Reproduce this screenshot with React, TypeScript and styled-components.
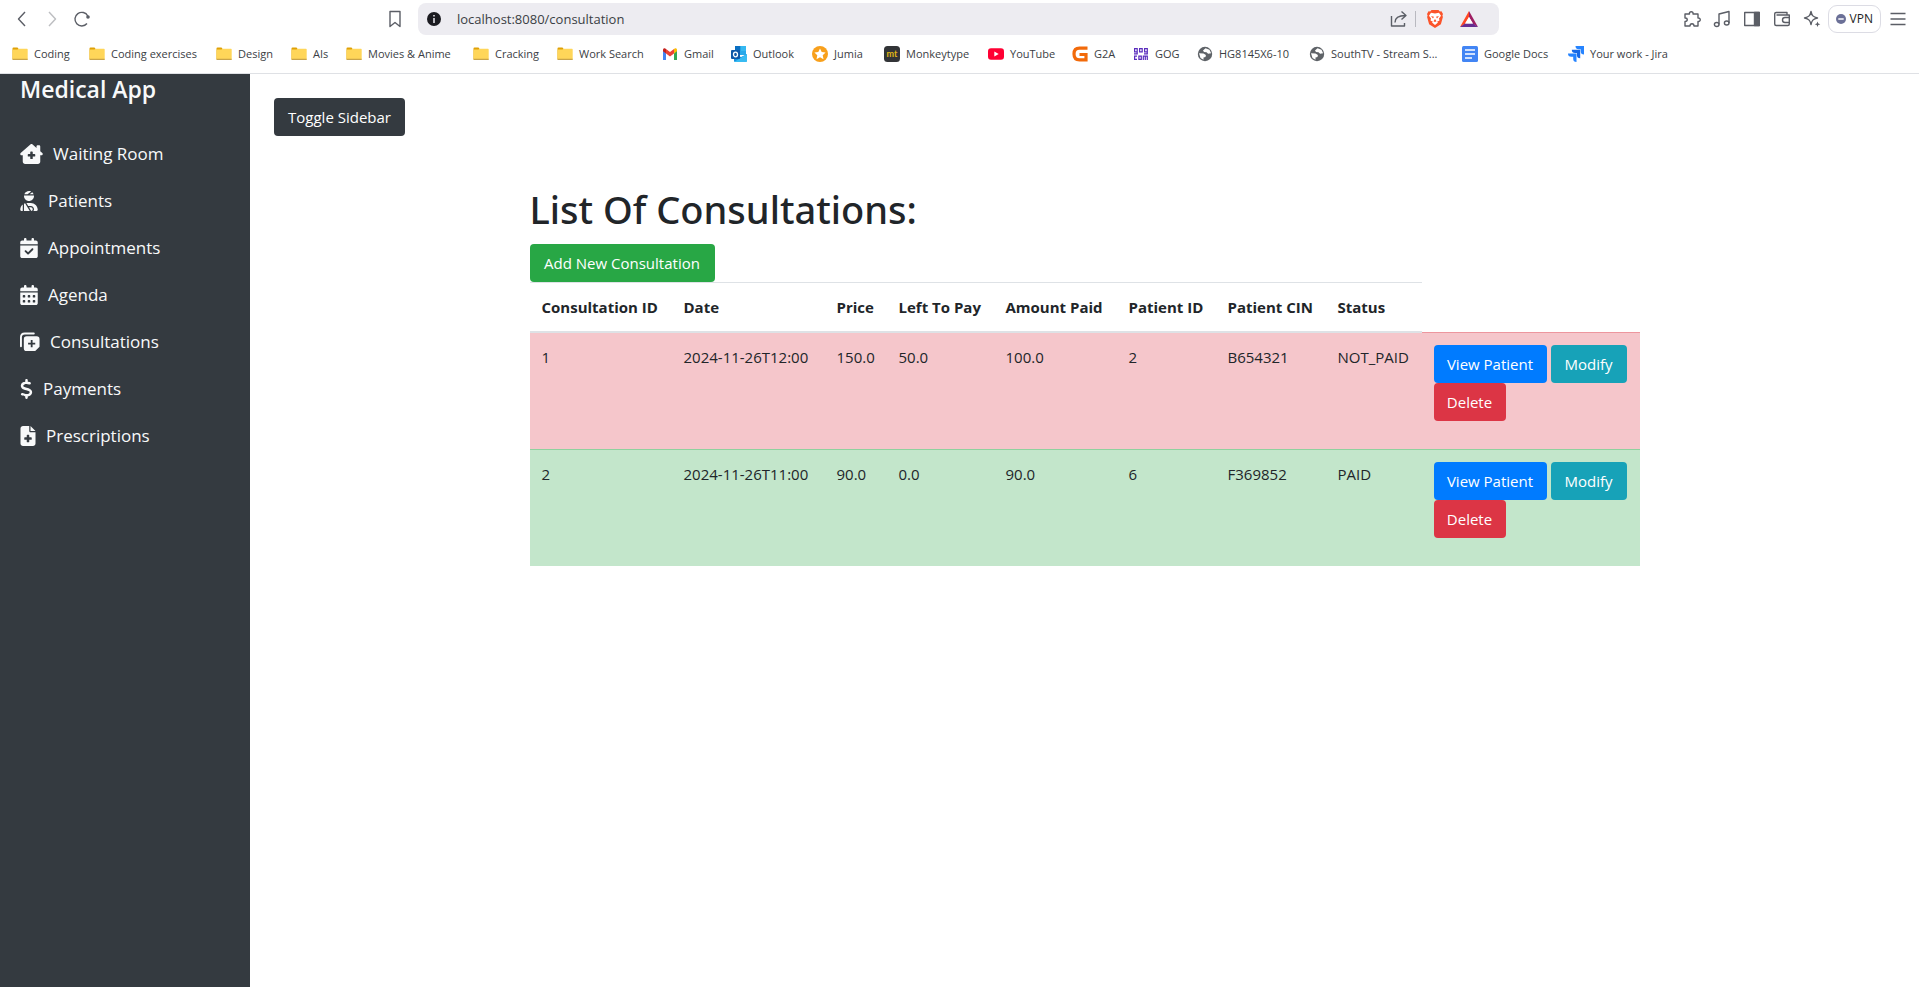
import React from "react";
import styled, { createGlobalStyle } from "styled-components";
import {
  FaHouseChimneyMedical,
  FaUserInjured,
  FaCalendarCheck,
  FaCalendarDays,
  FaDollarSign,
  FaFileMedical,
} from "react-icons/fa6";

const GlobalStyle = createGlobalStyle`
  *, *::before, *::after { box-sizing: border-box; }
  body {
    margin: 0;
    background: #fff;
    color: #212529;
    font-family: "Open Sans", "Noto Sans", sans-serif;
    font-size: 15px;
    line-height: 24px;
  }
`;

/* ---------- Browser chrome ---------- */

const Page = styled.div`
  min-height: 100vh;
  display: flex;
  flex-direction: column;
`;

const Chrome = styled.header`
  border-bottom: 1px solid #dfe1e5;
  background: #fff;
  color: #3b3e44;
`;

const Toolbar = styled.div`
  display: flex;
  align-items: center;
  height: 38px;
  padding: 3px 6px 3px 14px;
`;

const IconButton = styled.button<{ $faded?: boolean }>`
  display: flex;
  align-items: center;
  justify-content: center;
  width: 30px;
  height: 30px;
  padding: 0;
  border: 0;
  background: none;
  color: #5b5e66;
  opacity: ${(p) => (p.$faded ? 0.4 : 1)};
  flex: none;
`;

const NavGroup = styled.div`
  display: flex;
  flex: 0 0 373px;
  margin-left: -7px;
`;

const AddressBar = styled.div`
  display: flex;
  align-items: center;
  flex: 1;
  height: 32px;
  margin-left: 8px;
  padding: 0 15px 0 9px;
  border-radius: 8px;
  background: #edecf1;
`;

const AddressInput = styled.input`
  flex: 1;
  min-width: 0;
  margin-left: 16px;
  padding: 0;
  border: 0;
  outline: 0;
  background: none;
  color: #3b3e44;
  font: 13px/20px "Open Sans", "Noto Sans", sans-serif;
`;

const Divider = styled.span`
  width: 1px;
  height: 16px;
  margin-left: -3px;
  background: #b9b9c0;
`;

const AddressTools = styled.div`
  display: flex;
  align-items: center;
  gap: 4px;
`;

const ToolGroup = styled.div`
  display: flex;
  align-items: center;
  margin-left: 178px;
`;

const VpnButton = styled.button`
  display: flex;
  align-items: center;
  gap: 4px;
  height: 28px;
  margin: 0 2px 0 1px;
  padding: 0 7px;
  border: 1px solid #dcdce4;
  border-radius: 9px;
  background: #fff;
  color: #1d1f25;
  font: 12px/20px "Open Sans", "Noto Sans", sans-serif;
`;

const Bookmarks = styled.nav`
  display: flex;
  height: 35px;
  padding: 0 12px 3px;
`;

const Bookmark = styled.a<{ $width: number }>`
  display: flex;
  align-items: center;
  gap: 6px;
  flex: 0 0 ${(p) => p.$width}px;
  color: #3b3e44;
  font-size: 11px;
  line-height: 16px;
  white-space: nowrap;
  text-decoration: none;

  svg { flex: none; }
`;

/* ---------- Application ---------- */

const Body = styled.div`
  display: flex;
  flex: 1;
`;

const Sidebar = styled.aside`
  flex: 0 0 250px;
  padding: 0 20px;
  background: #343a40;
  color: #f8f9fa;
`;

const Brand = styled.h2`
  margin: 0 0 26px;
  font-size: 23px;
  font-weight: 600;
  line-height: 30px;
`;

const Menu = styled.ul`
  margin: 0;
  padding: 0;
  list-style: none;
`;

const MenuLink = styled.a<{ $icon: number }>`
  display: flex;
  align-items: center;
  gap: 10px;
  height: 47px;
  color: #f8f9fa;
  font-size: 17px;
  text-decoration: none;

  svg {
    flex: none;
    width: ${(p) => p.$icon}px;
    height: 20px;
  }
`;

const Main = styled.main`
  flex: 1;
  min-width: 0;
  padding: 24px;
`;

const tones = {
  dark: "#343a40",
  success: "#28a745",
  primary: "#007bff",
  info: "#17a2b8",
  danger: "#dc3545",
};

const Button = styled.button<{ $tone: keyof typeof tones; $width: number }>`
  width: ${(p) => p.$width}px;
  height: 38px;
  padding: 0;
  border: 0;
  border-radius: 4px;
  background: ${(p) => tones[p.$tone]};
  color: #fff;
  font: inherit;
  white-space: nowrap;
`;

const Container = styled.section`
  max-width: 1140px;
  margin: 48px auto 0;
  padding: 0 15px;
`;

const Heading = styled.h1`
  margin: 0 0 10px;
  font-family: "Noto Sans", "Open Sans", sans-serif;
  font-size: 38px;
  font-weight: 500;
  line-height: 50px;
`;

const Table = styled.table`
  width: 100%;
  table-layout: fixed;
  border-collapse: collapse;
`;

const AddRow = styled.div`
  display: flex;
`;

const HeadCell = styled.th`
  padding: 12px;
  border-top: 1px solid #dee2e6;
  border-bottom: 2px solid #dee2e6;
  font-weight: 700;
  text-align: left;
  white-space: nowrap;
`;

const Row = styled.tr<{ $paid: boolean }>`
  background: ${(p) => (p.$paid ? "#c3e6cb" : "#f5c6cb")};

  td { border-top: 1px solid ${(p) => (p.$paid ? "#8fd19e" : "#ed969e")}; }
`;

const Cell = styled.td`
  padding: 12px;
  vertical-align: top;
  white-space: nowrap;
`;

const Actions = styled.div`
  display: flex;
  flex-wrap: wrap;
  column-gap: 4px;
  margin-bottom: 16px;
`;

/* ---------- Icons ---------- */

const Line = ({ children }: { children: React.ReactNode }) => (
  <svg width="18" height="18" viewBox="0 0 18 18" fill="none" stroke="currentColor" strokeWidth="1.4" strokeLinejoin="round" aria-hidden="true">
    {children}
  </svg>
);

const Logo = ({ children }: { children: React.ReactNode }) => (
  <svg width="16" height="16" viewBox="0 0 16 16" aria-hidden="true">{children}</svg>
);

const Folder = () => (
  <Logo>
    <path d="M.5 2.500a1 1 0 0 1 1-1h4L7 3.500h8V13H.5z" fill="#e0a106" />
    <path d="M.5 4.500Q.5 3.500 1.500 3.500h4l1-.7H15q.7 0 .7.7v9.700q0 .8-.8.8H1.300q-.8 0-.8-.8z" fill="#ffd659" />
    <path d="M.5 12.800h15.200v.4q0 .9-.8.9H1.300q-.8 0-.8-.9z" fill="#c9a44a" />
  </Logo>
);

const Gmail = () => (
  <Logo>
    <path d="M1 3.500V14h3V7.200z" fill="#4285f4" />
    <path d="M12 7.200V14h3V3.500z" fill="#34a853" />
    <path d="M12 3v4.500l3-2.200V4c0-2-2-2.500-3-1z" fill="#fbbc04" />
    <path d="M1 4v1.300l3 2.200V3C3 1.500 1 2 1 4z" fill="#c5221f" />
    <path d="M4 3v4.500l4 3 4-3V3L8 6z" fill="#ea4335" />
  </Logo>
);

const Outlook = () => (
  <Logo>
    <path d="M4 0h11v9H4z" fill="#28a8ea" />
    <path d="M4 0h5.500v5H4z" fill="#0a6fc2" />
    <path d="M9.500 0H15v5H9.500z" fill="#35b8f1" />
    <path d="M3 8l7 3 6-3v7q0 1-1 1H4q-1 0-1-1z" fill="#1490df" />
    <path d="M3 16l13-8v7q0 1-1 1z" fill="#50d9ff" opacity=".6" />
    <rect y="4" width="9" height="9" rx="1" fill="#0f59a8" />
    <ellipse cx="4.500" cy="8.500" rx="2" ry="2.300" fill="none" stroke="#fff" strokeWidth="1.300" />
  </Logo>
);

const Jumia = () => (
  <Logo>
    <circle cx="8" cy="8" r="8" fill="#f8a01c" />
    <path d="M8 2.500l1.700 3.600 3.900.5-2.900 2.700.8 3.900L8 11.300l-3.500 1.900.8-3.900L2.400 6.600l3.900-.5z" fill="#fff" />
  </Logo>
);

const Monkeytype = () => (
  <Logo>
    <rect width="16" height="16" rx="3.500" fill="#323437" />
    <text x="8" y="11" textAnchor="middle" fontSize="9" fontWeight="700" fontFamily="Lato, sans-serif" fill="#e2b714">mt</text>
  </Logo>
);

const YouTube = () => (
  <Logo>
    <rect y="2.300" width="16" height="11.400" rx="3" fill="#ff0033" />
    <path d="M6.300 5.500v5L10.700 8z" fill="#fff" />
  </Logo>
);

const G2A = () => (
  <Logo>
    <path d="M15.500 2.200H7.500Q2 2.200 2 8t5.500 5.800H14V8.500H7.500" fill="none" stroke="#f26a0a" strokeWidth="3.200" />
  </Logo>
);

const Gog = () => (
  <Logo>
    <g fill="none" stroke="#5a2dbd" strokeWidth="1.200">
      <path d="M4.200 5.800H1.600V2.600h2.600v5.200H1" />
      <path d="M6.600 2.600h2.600v3.200H6.600z" />
      <path d="M14.300 5.800h-2.700V2.600h2.700v5.200h-3.300" />
      <path d="M4 10.200H1.600v3.200H4" />
      <path d="M5.900 10.200h2.400v3.200H5.900z" />
      <path d="M10.300 14v-3.800h4V14M12.300 10.200V14" />
    </g>
  </Logo>
);

const Globe = () => (
  <Logo>
    <circle cx="8" cy="8" r="7.200" fill="#5f6368" />
    <path d="M8.500 2.200l4 1.600 1.600 3.400-3 .6-1.600-1.600-2.500-.3-1-1.500zM2 7.200l4.500.4 2.400 1.400-.4 2-2 .6v2.200L3.500 12z" fill="#fff" />
  </Logo>
);

const Docs = () => (
  <Logo>
    <rect width="16" height="16" rx="1.500" fill="#4285f4" />
    <path d="M3 4.100h10M3 8h10M3 11.900h7" stroke="#fff" strokeWidth="1.500" />
  </Logo>
);

const Jira = () => (
  <Logo>
    <path d="M7.500 0H16v8.500q-3.300 0-3.300-3.300V3.300h-1.900Q7.500 3.300 7.500 0z" fill="#2684ff" />
    <path d="M3.800 3.800h8.400v8.400q-3.300 0-3.300-3.300V7.100H7.100q-3.300 0-3.300-3.300z" fill="#1769e6" />
    <path d="M0 7.500h8.500V16q-3.300 0-3.300-3.300v-1.900H3.300Q0 10.800 0 7.500z" fill="#2684ff" />
  </Logo>
);

const StackPlus = () => (
  <svg viewBox="0 0 21 20" fill="currentColor" aria-hidden="true">
    <path d="M1 14.500V5Q1 1 5 1h9.500" fill="none" stroke="currentColor" strokeWidth="2" strokeLinecap="round" />
    <path
      fillRule="evenodd"
      d="M7 4h10.500Q20.500 4 20.500 7v8l-4.500 4.500H7q-3 0-3-3V7q0-3 3-3zm4.300 4v2.800H8.500v1.900h2.800v2.800h1.900v-2.800H16v-1.900h-2.800V8z"
    />
  </svg>
);

/* ---------- Data ---------- */

const bookmarks: [string, number, React.ComponentType][] = [
  ["Coding", 77, Folder],
  ["Coding exercises", 127, Folder],
  ["Design", 75, Folder],
  ["AIs", 55, Folder],
  ["Movies & Anime", 127, Folder],
  ["Cracking", 84, Folder],
  ["Work Search", 105, Folder],
  ["Gmail", 69, Gmail],
  ["Outlook", 81, Outlook],
  ["Jumia", 72, Jumia],
  ["Monkeytype", 104, Monkeytype],
  ["YouTube", 84, YouTube],
  ["G2A", 61, G2A],
  ["GOG", 64, Gog],
  ["HG8145X6-10", 112, Globe],
  ["SouthTV - Stream S...", 153, Globe],
  ["Google Docs", 106, Docs],
  ["Your work - Jira", 110, Jira],
];

const menu: [string, number, React.ComponentType][] = [
  ["Waiting Room", 23, FaHouseChimneyMedical],
  ["Patients", 18, FaUserInjured],
  ["Appointments", 18, FaCalendarCheck],
  ["Agenda", 18, FaCalendarDays],
  ["Consultations", 20, StackPlus],
  ["Payments", 13, FaDollarSign],
  ["Prescriptions", 16, FaFileMedical],
];

const columns: [string, number][] = [
  ["Consultation ID", 142],
  ["Date", 153],
  ["Price", 62],
  ["Left To Pay", 107],
  ["Amount Paid", 123],
  ["Patient ID", 99],
  ["Patient CIN", 110],
  ["Status", 96],
];

const consultations = [
  ["1", "2024-11-26T12:00", "150.0", "50.0", "100.0", "2", "B654321", "NOT_PAID"],
  ["2", "2024-11-26T11:00", "90.0", "0.0", "90.0", "6", "F369852", "PAID"],
];

export default function App() {
  return (
    <Page>
      <GlobalStyle />
      <Chrome>
        <Toolbar>
          <NavGroup>
            <IconButton aria-label="Back">
              <Line><path d="M12 2L5.500 9l6.500 7" /></Line>
            </IconButton>
            <IconButton aria-label="Forward" $faded>
              <Line><path d="M6 2l6.500 7L6 16" /></Line>
            </IconButton>
            <IconButton aria-label="Reload">
              <Line>
                <path d="M14 13.500A6.800 6.800 0 1 1 14.800 6" />
                <circle cx="15" cy="7" r="1.800" fill="currentColor" stroke="none" />
              </Line>
            </IconButton>
          </NavGroup>
          <IconButton aria-label="Bookmark this page">
            <Line><path d="M4 1.500h10v15l-5-4-5 4z" /></Line>
          </IconButton>
          <AddressBar>
            <svg width="14" height="14" viewBox="0 0 14 14" aria-hidden="true">
              <circle cx="7" cy="7" r="7" fill="#1b1b20" />
              <path d="M7 3v1.500M7 6v5" stroke="#edecf1" strokeWidth="1.500" />
            </svg>
            <AddressInput aria-label="Address" defaultValue="localhost:8080/consultation" />
            <AddressTools>
              <IconButton aria-label="Share">
                <Line>
                  <path d="M1.500 6v10h13v-3M5 12.500c0-4.500 3-7 10.500-7M11.500 1.500l4.500 4-4.500 4" />
                </Line>
              </IconButton>
              <Divider />
              <IconButton aria-label="Shields">
                <svg width="16" height="18" viewBox="0 0 16 18" aria-hidden="true">
                  <path d="M4.500 0h7l1.300 1.400 1.700-.1L16 4l-.6 1.500.5 1.500-2 7.300L8 18l-5.900-3.700L.1 7l.5-1.500L0 4l1.500-2.700 1.700.1z" fill="#fb542b" />
                  <path d="M4 2.800l4 .6 4-.6 2 3-2 2.800.5 2-2.500 1.200 1 .8L8 15l-3-2.400 1-.8-2.500-1.200.5-2-2-2.800z" fill="#fff" />
                  <path d="M4 6l3 .8L6 8.500zM12 6l-3 .8 1 1.700zM6.500 11.300L8 9l1.500 2.300L8 12z" fill="#fb542b" />
                </svg>
              </IconButton>
              <IconButton aria-label="Rewards">
                <svg width="18" height="16" viewBox="0 0 18 16" aria-hidden="true">
                  <path d="M9 0L0 16l5-3 4-7z" fill="#ff4724" />
                  <path d="M9 0l9 16-5-3-4-7z" fill="#9e1f63" />
                  <path d="M0 16l5-3.500h8l5 3.500z" fill="#662d91" />
                  <path d="M9 6l4 6.500H5z" fill="#fff" />
                </svg>
              </IconButton>
            </AddressTools>
          </AddressBar>
          <ToolGroup>
            <IconButton aria-label="Extensions">
              <Line>
                <path d="M2 4h4.500c-.8-3 4.300-3 3.500 0H15v4c3-.5 3 4 0 3.500V16h-4c0-3-4-3-4 0H2v-4.500c3 0 3-3.500 0-3.500z" />
              </Line>
            </IconButton>
            <IconButton aria-label="Playlist">
              <Line>
                <path d="M6 14.500V4l10-2.500V13" />
                <ellipse cx="3.700" cy="14.500" rx="2.300" ry="2" />
                <ellipse cx="13.700" cy="13" rx="2.300" ry="2" />
              </Line>
            </IconButton>
            <IconButton aria-label="Side panel">
              <Line>
                <path d="M1.700 2.500h14.600v13H1.700z" />
                <path d="M11.500 2.500h4.800v13h-4.800z" fill="currentColor" />
              </Line>
            </IconButton>
            <IconButton aria-label="Wallet">
              <Line>
                <path d="M14 5V2.500H3.200q-1.500 0-1.500 1.300V14q0 1.500 1.500 1.500h11.600q1.500 0 1.500-1.500V5H3.500M16.300 7.500H12a2.500 2.500 0 0 0 0 5h4.300" />
              </Line>
            </IconButton>
            <IconButton aria-label="Assistant">
              <Line>
                <path d="M8 1.500c.8 4 2 5.500 6.500 6.500-4.500 1-5.700 2.500-6.500 6.500C7.200 10.500 6 9 1.500 8 6 7 7.200 5.500 8 1.500z" />
                <path d="M14.500 11.500l.8 2 2 .8-2 .8-.8 2-.8-2-2-.8 2-.8z" fill="currentColor" stroke="none" />
              </Line>
            </IconButton>
            <VpnButton>
              <svg width="10" height="10" viewBox="0 0 10 10" aria-hidden="true">
                <circle cx="5" cy="5" r="5" fill="#6b7097" />
                <path d="M2.300 5h5.400" stroke="#fff" strokeWidth="1.500" />
              </svg>
              VPN
            </VpnButton>
            <IconButton aria-label="Menu">
              <Line><path d="M1.500 3.500h15M1.500 9h15M1.500 14.500h15" /></Line>
            </IconButton>
          </ToolGroup>
        </Toolbar>
        <Bookmarks aria-label="Bookmarks">
          {bookmarks.map(([label, width, Icon]) => (
            <Bookmark key={label} href="#" $width={width}>
              <Icon />
              {label}
            </Bookmark>
          ))}
        </Bookmarks>
      </Chrome>
      <Body>
        <Sidebar>
          <Brand>Medical App</Brand>
          <Menu>
            {menu.map(([label, width, Icon]) => (
              <li key={label}>
                <MenuLink href="#" $icon={width}>
                  <Icon />
                  {label}
                </MenuLink>
              </li>
            ))}
          </Menu>
        </Sidebar>
        <Main>
          <Button $tone="dark" $width={131}>Toggle Sidebar</Button>
          <Container>
            <Heading>List Of Consultations:</Heading>
            <AddRow>
              <Button $tone="success" $width={185}>Add New Consultation</Button>
            </AddRow>
            <Table>
              <colgroup>
                {columns.map(([label, width]) => <col key={label} width={width} />)}
                <col />
              </colgroup>
              <thead>
                <tr>
                  {columns.map(([label]) => <HeadCell key={label} scope="col">{label}</HeadCell>)}
                </tr>
              </thead>
              <tbody>
                {consultations.map((values) => (
                  <Row key={values[0]} $paid={values[7] === "PAID"}>
                    {values.map((value, i) => <Cell key={columns[i][0]}>{value}</Cell>)}
                    <Cell>
                      <Actions>
                        <Button $tone="primary" $width={113}>View Patient</Button>
                        <Button $tone="info" $width={76}>Modify</Button>
                        <Button $tone="danger" $width={72}>Delete</Button>
                      </Actions>
                    </Cell>
                  </Row>
                ))}
              </tbody>
            </Table>
          </Container>
        </Main>
      </Body>
    </Page>
  );
}
